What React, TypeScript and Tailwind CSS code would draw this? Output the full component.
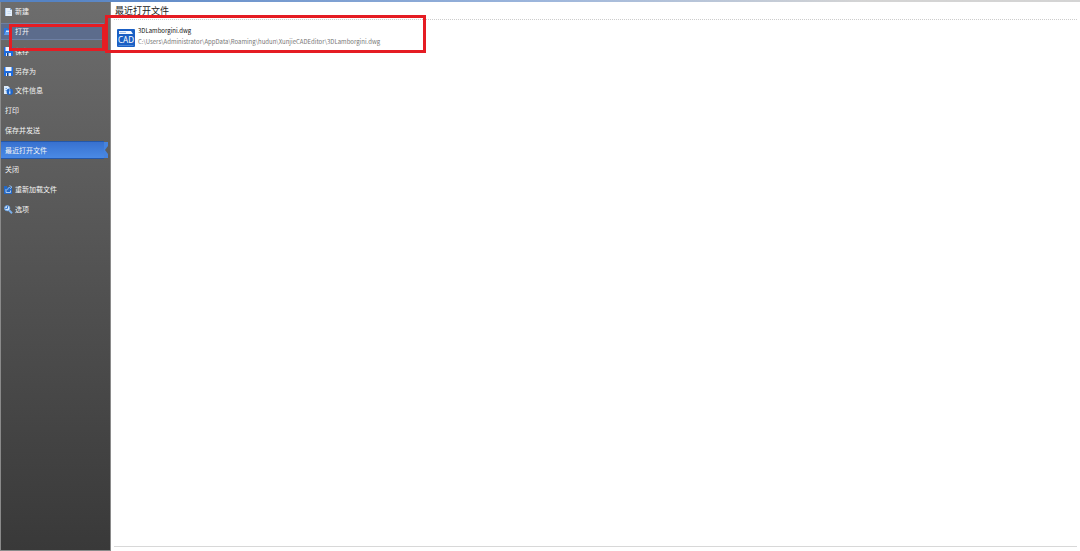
import React from 'react';

type IconProps = { className?: string };

type MenuItem = {
  label: string;
  icon?: React.ComponentType<IconProps>;
  state?: 'hover' | 'active';
};

function NewIcon({ className }: IconProps) {
  return (
    <svg className={className} viewBox="0 0 9 9" aria-hidden="true">
      <path d="M1 1H6L8 3V9H1Z" fill="#e6f0fb" />
      <path d="M6 1V3H8Z" fill="#7fa9d8" />
      <path d="M1.5 1V9" stroke="#a8c8ee" strokeWidth="1" />
      <path d="M3.5 4.5H7M3.5 6.5H7" stroke="#c3d9f2" strokeWidth="0.8" />
    </svg>
  );
}

function OpenIcon({ className }: IconProps) {
  return (
    <svg className={className} viewBox="0 0 9 9" aria-hidden="true">
      <path d="M0 1H3L4 2H8V8H0Z" fill="#2a74dc" />
      <path d="M2 3.5H8V7H1.5Z" fill="#d5e6fa" />
      <path d="M0 8L1.5 5H5L7 8Z" fill="#5d9bea" />
    </svg>
  );
}

function SaveIcon({ className }: IconProps) {
  return (
    <svg className={className} viewBox="0 0 9 9" aria-hidden="true">
      <rect width="9" height="9" rx="0.5" fill="#1c6be0" />
      <rect x="1.5" y="0" width="6" height="4" fill="#eef5ff" />
      <rect x="2" y="6" width="5" height="3" fill="#dbe9fb" />
      <rect x="3" y="6" width="1.5" height="3" fill="#123f86" />
    </svg>
  );
}

function InfoIcon({ className }: IconProps) {
  return (
    <svg className={className} viewBox="0 0 9 9" aria-hidden="true">
      <path d="M0 0H4L6 2V8H0Z" fill="#dcebfb" />
      <path d="M1.5 2.5H3M1.5 4.5H3" stroke="#5b98df" strokeWidth="0.8" />
      <circle cx="5.8" cy="5.8" r="3.2" fill="#1d66cc" />
      <path d="M5.8 3.5V4.4M5.8 5.2V7.8" stroke="#fff" strokeWidth="1.1" />
    </svg>
  );
}

function ReloadIcon({ className }: IconProps) {
  return (
    <svg className={className} viewBox="0 0 9 9" aria-hidden="true">
      <path d="M0 1H3V2.5H8V9H0Z" fill="#2468c4" />
      <path d="M2 4V7.5H6.5V5.5" fill="none" stroke="#b9d5f6" strokeWidth="0.9" />
      <path d="M3.5 4.8Q4 2 6.5 2M5.5 0.5L8 2L6 4" fill="none" stroke="#8fbcf0" strokeWidth="0.9" />
    </svg>
  );
}

function OptionsIcon({ className }: IconProps) {
  return (
    <svg className={className} viewBox="0 0 9 9" aria-hidden="true">
      <circle cx="3.2" cy="3.2" r="2.7" fill="#d3e6fb" stroke="#5b98df" strokeWidth="0.8" />
      <path d="M4.8 5L8 8.2" stroke="#79aeea" strokeWidth="2" />
      <path d="M1.2 3.4H3.5V1.2" fill="none" stroke="#2d73cd" strokeWidth="1" />
    </svg>
  );
}

function CadIcon({ className }: IconProps) {
  return (
    <svg className={className} viewBox="0 0 18 18" aria-hidden="true">
      <rect width="18" height="18" rx="1" fill="#1a5fc4" />
      <path d="M2 2H14L16 5H2Z" fill="#f4f8ff" />
      <path d="M2.5 3.5H9" stroke="#7aa5df" strokeWidth="0.7" />
      <path d="M1.5 16.5H16.5" stroke="#4d87d8" strokeWidth="1" />
      <text
        x="9"
        y="14"
        textAnchor="middle"
        fontFamily="Noto Sans, sans-serif"
        fontSize="8"
        fill="#fff"
      >
        CAD
      </text>
    </svg>
  );
}

const menuItems: MenuItem[] = [
  { label: '新建', icon: NewIcon },
  { label: '打开', icon: OpenIcon, state: 'hover' },
  { label: '保存', icon: SaveIcon },
  { label: '另存为', icon: SaveIcon },
  { label: '文件信息', icon: InfoIcon },
  { label: '打印' },
  { label: '保存并发送' },
  { label: '最近打开文件', state: 'active' },
  { label: '关闭' },
  { label: '重新加载文件', icon: ReloadIcon },
  { label: '选项', icon: OptionsIcon },
];

const stateClass = {
  hover: 'border-y border-[#6d7fa3] bg-[#5c6c8c]',
  active: 'border-y border-[#2457a8] bg-linear-to-b from-[#3871cf] to-[#4a8ae6]',
};

function MenuRow({ item }: { item: MenuItem }) {
  const Icon = item.icon;
  return (
    <li className="relative flex-1 pb-[2px]">
      <button
        type="button"
        className={`flex h-full w-full items-center gap-[2px] text-left text-[7px] leading-none whitespace-nowrap text-[#f4f4f4] ${
          Icon ? 'pl-[3px]' : 'pl-1'
        } ${item.state ? stateClass[item.state] : ''}`}
      >
        {Icon && <Icon className="size-[9px] shrink-0" />}
        {item.label}
      </button>

      {item.state === 'active' && (
        <svg className="absolute top-0 -right-1 h-[18px] w-1" viewBox="0 0 4 18" aria-hidden="true">
          <path d="M0 1H4V5L1 9L4 13V17H0Z" fill="#4583e0" />
        </svg>
      )}

      {/* Highlight frame */}
      {item.state === 'hover' && (
        <span className="pointer-events-none absolute top-px -right-px z-10 h-[27px] w-24 border-3 border-[#e51c23]" />
      )}
    </li>
  );
}

export default function App() {
  return (
    <div
      className="flex h-screen flex-col bg-white"
      style={{ fontFamily: '"Liberation Sans", "Noto Sans CJK SC", sans-serif' }}
    >
      <div className="h-[2px] shrink-0 bg-linear-to-r from-[#5583c4] from-5% via-[#9db6dc] via-50% to-[#d4d4d4] to-80%" />

      <div className="flex min-h-0 flex-1">
        <nav className="w-[111px] shrink-0 border border-t-0 border-[#8a8a8a] bg-linear-to-b from-[#6d6d6d] to-[#393939] pt-px pr-[6px]">
          <ul className="flex h-[217px] flex-col">
            {menuItems.map(item => (
              <MenuRow key={item.label} item={item} />
            ))}
          </ul>
        </nav>

        <main className="flex min-w-0 flex-1 flex-col pr-[3px] pb-1 pl-[3px]">
          <h1 className="h-[18px] border-b border-dotted border-[#cccccc] pl-px text-[9px] leading-[18px] text-[#222222]">
            最近打开文件
          </h1>

          <div className="relative flex-1 border-b border-[#d8d8d8]">
            <a
              href="#recent"
              className="flex items-center gap-[3px] pt-[5px] pl-[3px] whitespace-nowrap"
              style={{ fontFamily: '"Noto Sans CJK SC", sans-serif' }}
            >
              <CadIcon className="mt-[3px] size-[18px] shrink-0" />
              <span className="flex flex-col text-[6px] leading-[11px]">
                <span className="text-[#111111]">3DLamborgini.dwg</span>
                <span className="text-[#777777]">
                  C:\Users\Administrator\AppData\Roaming\hudun\XunjieCADEditor\3DLamborgini.dwg
                </span>
              </span>
            </a>
            <span className="pointer-events-none absolute -top-[5px] -left-[9px] z-10 h-[38px] w-[321px] border-3 border-[#e51c23]" />
          </div>
        </main>
      </div>
    </div>
  );
}
